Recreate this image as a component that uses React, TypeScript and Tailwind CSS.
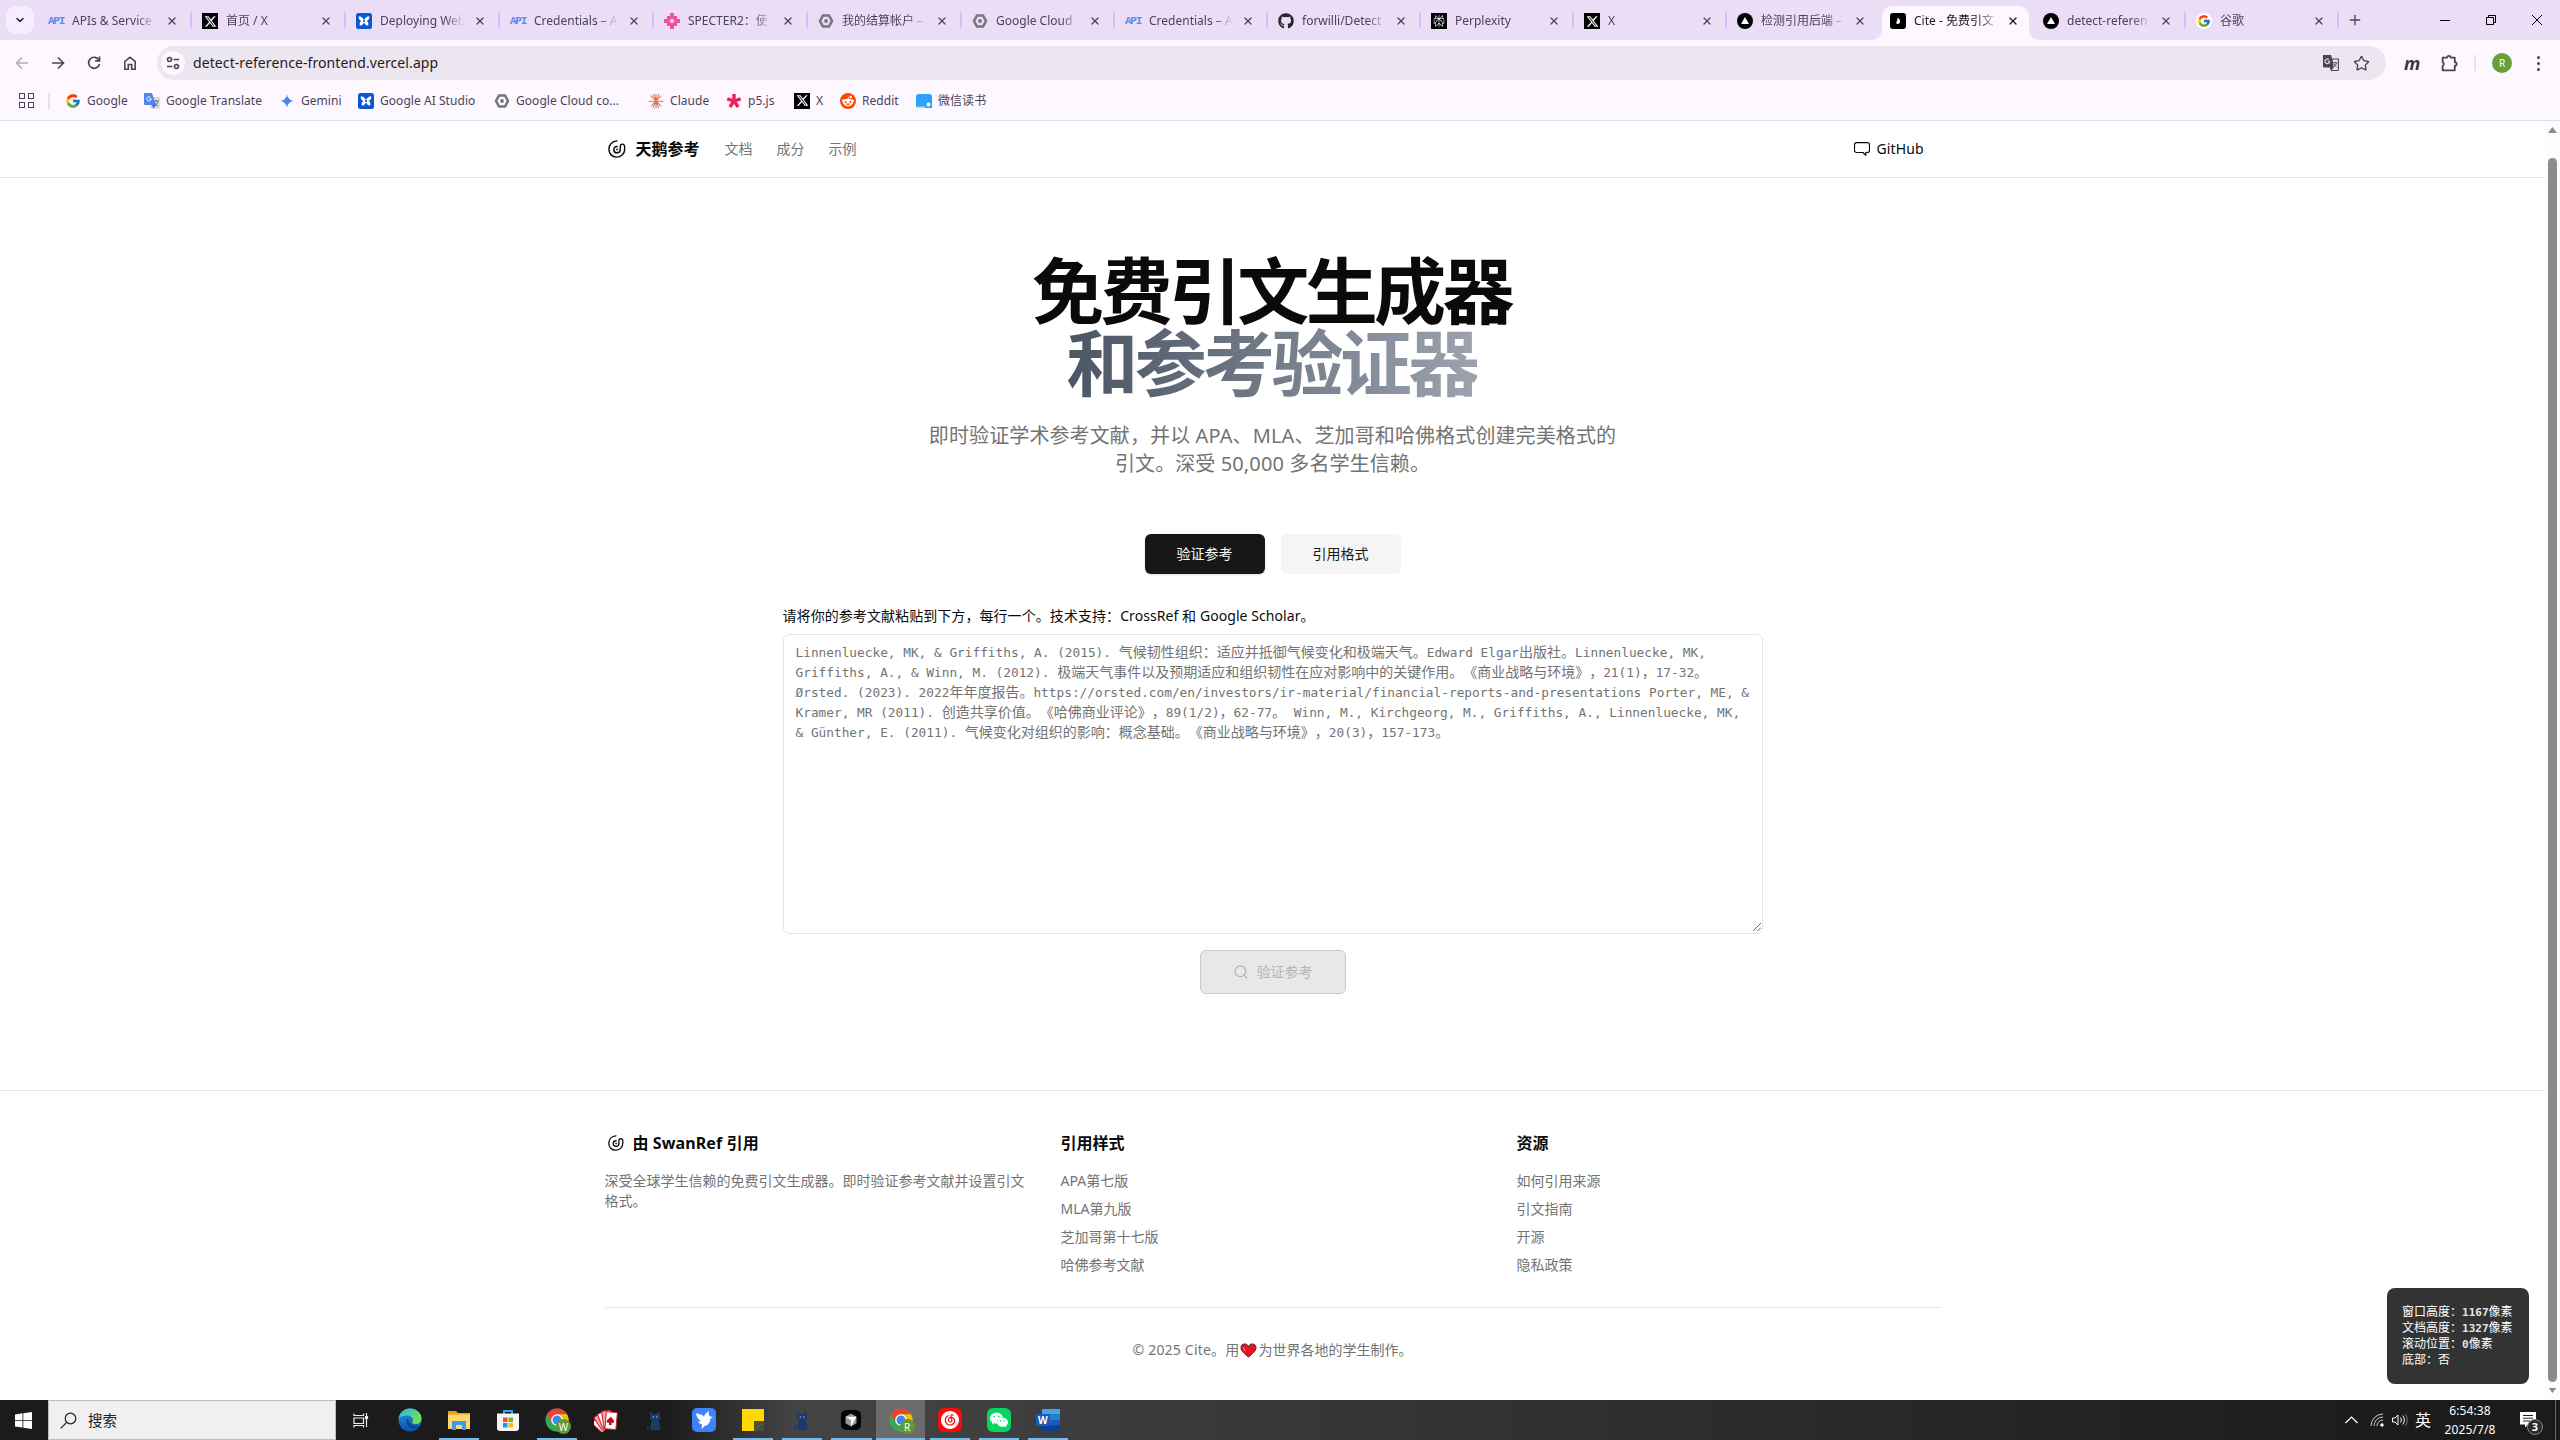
import React from "react";
import { FcGoogle } from "react-icons/fc";
import { FaGithub, FaXTwitter, FaRedditAlien } from "react-icons/fa6";
import { SiWechat, SiNeteasecloudmusic, SiPerplexity } from "react-icons/si";
import { Search, Star, X, Plus, ChevronDown } from "lucide-react";

/* ---------- small glyphs ---------- */

const ApiIcon = () => (
  <span className="font-['Liberation_Sans_Narrow','Liberation_Mono',monospace] text-[11px] font-bold leading-4 tracking-[-1.300px] text-[#5b8def]">API</span>
);
const XIcon = () => (
  <span className="flex size-4 items-center justify-center bg-black">
    <FaXTwitter className="size-[13px] text-white" />
  </span>
);
const StudioIcon = () => (
  <svg viewBox="0 0 16 16" className="size-4">
    <rect width="16" height="16" rx="2.500" fill="#0b57d0" />
    <path d="M2.800 3.200c2.600.2 4.300 1.600 5.200 4 .9-2.400 2.600-3.800 5.200-4 .4 2.200-.6 3.900-2.600 4.800 1.700.9 2.200 2.700 1.500 4.600C10.300 12.600 8.800 11.300 8 9.200c-.8 2.100-2.300 3.400-4.100 3.400-.7-1.900-.2-3.700 1.500-4.600C3.400 7.100 2.400 5.400 2.800 3.200z" fill="#fff" />
    <circle cx="8" cy="8" r="1.100" fill="#0b57d0" />
  </svg>
);
const SpecterIcon = () => (
  <svg viewBox="0 0 16 16" className="size-4" fill="#f0529c">
    <path d="M6 0h4v3h3v3h3v4h-3v3h-3v3H6v-3H3v-3H0V6h3V3h3zM8 5.500L5.500 8 8 10.500 10.500 8z" fillRule="evenodd" />
  </svg>
);
const CloudHex = () => (
  <svg viewBox="0 0 16 16" className="size-4" fill="none" stroke="#77777a">
    <path d="M5 2.500h6L14 8l-3 5.500H5L2 8z" strokeWidth="2.600" />
    <circle cx="8" cy="8" r="1.900" fill="#77777a" stroke="none" />
  </svg>
);
const VercelIcon = () => (
  <svg viewBox="0 0 16 16" className="size-4">
    <circle cx="8" cy="8" r="8" fill="#000" />
    <path d="M8 4l4 7H4z" fill="#fff" />
  </svg>
);
const CiteIcon = () => (
  <svg viewBox="0 0 16 16" className="size-4">
    <rect width="16" height="16" rx="3" fill="#000" />
    <path d="M7.500 4.500c2.500 1.500 3 3.500 2.400 5-.5 1.400-2.400 2-3.300.9-.8-1 .2-2 .6-3 .3-.8.200-2 .3-2.900z" fill="#fff" />
  </svg>
);
const PerplexityIcon = () => (
  <span className="flex size-4 items-center justify-center bg-black">
    <SiPerplexity className="size-3 text-white" />
  </span>
);
const TranslateIcon = () => (
  <svg viewBox="0 0 16 16" className="size-4">
    <rect x="6" y="4" width="10" height="12" rx="1" fill="#dadce0" />
    <path d="M9 8h6M12 7v1M14 8c-.5 2.500-2 4-4 5M10.500 9.500c.8 1.800 2 2.800 3.500 3.500" stroke="#5f6368" strokeWidth=".9" fill="none" />
    <path d="M1 0h7l4 12H1a1 1 0 0 1-1-1V1a1 1 0 0 1 1-1z" fill="#4d86ec" />
    <path d="M7.200 5.800H5.100M7.200 5.800a2.200 2.200 0 1 1-.8-1.700" stroke="#fff" strokeWidth="1" fill="none" />
    <path d="M8 12h4l-2.500 3.500z" fill="#3367d6" />
  </svg>
);
const GeminiIcon = () => (
  <svg viewBox="0 0 16 16" className="size-4">
    <defs>
      <linearGradient id="gem" x1="0" y1="1" x2="1" y2="0">
        <stop offset="0" stopColor="#2a9be8" />
        <stop offset=".6" stopColor="#4b88e2" />
        <stop offset="1" stopColor="#8b77d8" />
      </linearGradient>
    </defs>
    <path d="M8 1.500C8.600 5 10.800 7.400 14.500 8 10.800 8.600 8.600 11 8 14.500 7.400 11 5.200 8.600 1.500 8 5.200 7.400 7.400 5 8 1.500z" fill="url(#gem)" />
  </svg>
);
const ClaudeIcon = () => (
  <svg viewBox="0 0 16 16" className="size-4" stroke="#d97757" strokeWidth="1.050" strokeLinecap="round">
    <path d="M8 1v14M1 8.300h14M3 2.800l10 10.400M13 3L3 13M5.600 1.500l4.800 13M11 1.500l-6 13M1.300 5.300" />
  </svg>
);
const P5Icon = () => (
  <svg viewBox="0 0 16 16" className="size-4" stroke="#ed225d" strokeWidth="3.400">
    <path d="M8 8V1M8 8l6.700-2.200M8 8l4.200 5.900M8 8l-4.200 5.900M8 8L1.300 5.800" />
  </svg>
);
const RedditIcon = () => (
  <span className="flex size-4 items-center justify-center rounded-full bg-[#ff4500]">
    <FaRedditAlien className="size-3 text-white" />
  </span>
);
const ReadIcon = () => (
  <svg viewBox="0 0 16 16" className="size-4">
    <path d="M3 1h10a3 3 0 0 1 3 3v11H2a2 2 0 0 1-2-2V4a3 3 0 0 1 3-3z" fill="#2ba3fb" />
    <circle cx="12.500" cy="11.500" r="2" fill="#fff" />
    <path d="M1 13.500h9l-2 1.500H1z" fill="#b8e0ff" />
  </svg>
);
const SwanLogo = ({ className }: { className: string }) => (
  <svg viewBox="0 0 20 20" className={className} fill="none" stroke="#0a0a0a" strokeWidth="1.600" strokeLinecap="round">
    <path d="M10 1C4.500 1.300 1 5.200 1 10.300 1 15.300 4.700 19 9.500 19c5 0 8.700-3.400 9-8V7.800c0-2-1-3.200-2.500-3.200S13.600 5.700 13.600 7.400v3.200c0 2.100-1.400 3.600-3.500 3.600s-3.600-1.400-3.600-3.500S8 7.200 10.200 7.200" />
    <path d="M11 10.200c-.3-.6-1.400-.7-1.600.2-.2.900.9 1.200 1.300.7" strokeWidth="1.100" />
  </svg>
);

/* ---------- browser chrome ---------- */

const tabs: { icon: React.ReactNode; title: string; active?: boolean }[] = [
  { icon: <ApiIcon />, title: "APIs & Service" },
  { icon: <XIcon />, title: "首页 / X" },
  { icon: <StudioIcon />, title: "Deploying Web" },
  { icon: <ApiIcon />, title: "Credentials – A" },
  { icon: <SpecterIcon />, title: "SPECTER2：使" },
  { icon: <CloudHex />, title: "我的结算帐户 –" },
  { icon: <CloudHex />, title: "Google Cloud" },
  { icon: <ApiIcon />, title: "Credentials – A" },
  { icon: <FaGithub className="size-4 text-[#24292f]" />, title: "forwilli/Detect" },
  { icon: <PerplexityIcon />, title: "Perplexity" },
  { icon: <XIcon />, title: "X" },
  { icon: <VercelIcon />, title: "检测引用后端 –" },
  { icon: <CiteIcon />, title: "Cite - 免费引文", active: true },
  { icon: <VercelIcon />, title: "detect-referen" },
  { icon: <span className="flex size-4 items-center justify-center rounded-full bg-white"><FcGoogle className="size-3.5" /></span>, title: "谷歌" },
];

const Tab = ({ icon, title, active, wide }: { icon: React.ReactNode; title: string; active?: boolean; wide: boolean }) => (
  <div className={"relative mt-1.5 flex h-[34px] shrink-0 items-center pl-[11px] pr-[13px] " + (wide ? "w-[154px] " : "w-[153px] ") + (active ? "text-[#1d1b20]" : "text-[#4a4458]")}>
    {active && (
      <>
        <div className="absolute inset-y-0 left-[3px] right-[3px] rounded-t-[10px] bg-[#fdf7ff]" />
        <svg viewBox="0 0 10 10" className="absolute bottom-0 -left-[7px] size-[10px]" fill="#fdf7ff"><path d="M10 0v10H0A10 10 0 0 0 10 0z" /></svg>
        <svg viewBox="0 0 10 10" className="absolute bottom-0 -right-[7px] size-[10px]" fill="#fdf7ff"><path d="M0 0v10h10A10 10 0 0 1 0 0z" /></svg>
      </>
    )}
    <span className="relative -mt-1 flex w-4 shrink-0 justify-center">{icon}</span>
    <span className="relative -mt-1 ml-2 w-[84px] overflow-hidden whitespace-nowrap text-[12px] leading-4 [mask-image:linear-gradient(to_right,#000_78%,transparent)]">{title}</span>
    <X className="relative -mt-1 ml-auto size-3 shrink-0" strokeWidth={2.600} />
  </div>
);

const bookmarks: { icon: React.ReactNode; label: string; w: string }[] = [
  { icon: <FcGoogle className="size-4" />, label: "Google", w: "w-[79px]" },
  { icon: <TranslateIcon />, label: "Google Translate", w: "w-[135px]" },
  { icon: <GeminiIcon />, label: "Gemini", w: "w-[79px]" },
  { icon: <StudioIcon />, label: "Google AI Studio", w: "w-[136px]" },
  { icon: <CloudHex />, label: "Google Cloud co...", w: "w-[154px]" },
  { icon: <ClaudeIcon />, label: "Claude", w: "w-[78px]" },
  { icon: <P5Icon />, label: "p5.js", w: "w-[68px]" },
  { icon: <XIcon />, label: "X", w: "w-[46px]" },
  { icon: <RedditIcon />, label: "Reddit", w: "w-[76px]" },
  { icon: <ReadIcon />, label: "微信读书", w: "w-[90px]" },
];

const separatorAfter = (i: number) => !tabs[i].active && !(tabs[i + 1] && tabs[i + 1].active);

const Chrome = () => (
  <div className="h-[121px] shrink-0 border-b border-[#e3dcec] bg-[#fdf7ff] text-[#4a4458]">
    <div className="flex h-10 bg-[#eaddf5]">
      <div className="ml-1.5 mr-[3px] mt-1.5 flex h-7 w-7 shrink-0 items-center justify-center rounded-[10px] bg-[#f6edff]">
        <ChevronDown className="size-3 text-[#1d1b20]" strokeWidth={3} />
      </div>
      {tabs.map((t, i) => (
        <div key={i} className="relative">
          <Tab {...t} wide={i < 6} />
          {separatorAfter(i) && <div className="absolute -right-px top-3 h-4 w-0.5 rounded bg-[#d6bcfa]" />}
        </div>
      ))}
      <Plus className="ml-[9px] mt-3 size-4" strokeWidth={2} />
      <div className="ml-auto flex items-center gap-[30px] pr-[17px] text-black">
        <svg viewBox="0 0 12 12" className="size-3" stroke="currentColor"><path d="M1 6.500h10" /></svg>
        <svg viewBox="0 0 12 12" className="ml-1 size-3" stroke="currentColor" fill="none"><path d="M1.500 3.500h7v7h-7zM3.500 3.500v-2h7v7h-2" /></svg>
        <svg viewBox="0 0 12 12" className="ml-1 size-3" stroke="currentColor"><path d="M1 1l10 10M11 1L1 11" /></svg>
      </div>
    </div>
    <div className="flex h-[46px] items-center">
      <svg viewBox="0 0 16 16" className="ml-[14px] size-4 text-[#b1a9b9]" fill="none" stroke="currentColor" strokeWidth="1.600"><path d="M14 8H2.500M8 2.500L2.500 8 8 13.500" /></svg>
      <svg viewBox="0 0 16 16" className="ml-5 size-4" fill="none" stroke="currentColor" strokeWidth="1.600"><path d="M2 8h11.500M8 2.500L13.500 8 8 13.500" /></svg>
      <svg viewBox="0 0 16 16" className="ml-5 size-4" fill="none" stroke="currentColor" strokeWidth="1.700"><path d="M13 5.200A5.500 5.500 0 1 0 13.500 9" /><path d="M13.500 1.500v4.300H9.200" /></svg>
      <svg viewBox="0 0 16 16" className="ml-5 size-4" fill="none" stroke="currentColor" strokeWidth="1.600"><path d="M2.800 6.500L8 2.300l5.200 4.200v7.700H9.700V9.500H6.300v4.700H2.800z" /></svg>
      <div className="ml-[19px] flex h-[34px] w-[2229px] items-center rounded-full bg-[#ece6f0] pl-1">
        <div className="flex size-6 items-center justify-center rounded-full bg-[#fdf7ff]">
          <svg viewBox="0 0 16 16" className="size-4" fill="none" stroke="#4a4458" strokeWidth="1.600"><circle cx="4.500" cy="4.500" r="2" /><path d="M8.500 4.500H14M2 11.500h5.500" /><circle cx="11.500" cy="11.500" r="2" /></svg>
        </div>
        <span className="ml-2 text-[14px] leading-5 tracking-[0.090px] text-[#1d1b20]">detect-reference-frontend.vercel.app</span>
        <svg viewBox="0 0 18 18" className="ml-auto size-[18px]">
          <path d="M1 1h8l1.200 3.500H16a1 1 0 0 1 1 1V16a1 1 0 0 1-1 1H9l-1.200-3.500H2a1 1 0 0 1-1-1z" fill="#4a4458" />
          <path d="M10.600 5.600H15.900v10.300H9.800l2-2.400z" fill="#ece6f0" />
          <path d="M7.800 7.300H5.600M7.800 7.300a2.400 2.400 0 1 1-.9-1.900" stroke="#ece6f0" strokeWidth="1.100" fill="none" />
          <path d="M11 8.800h4.300M13.300 7.800v1M14.600 8.800c-.4 1.900-1.400 3-2.600 3.900M12 10c.6 1.300 1.500 2.200 2.700 2.900" stroke="#4a4458" strokeWidth=".9" fill="none" />
        </svg>
        <Star className="ml-[13px] mr-[16px] size-[17px]" strokeWidth={1.900} />
      </div>
      <span className="ml-[18px] w-[18px] text-[18px] font-bold italic leading-5 text-[#3a3540]">m</span>
      <svg viewBox="0 0 18 18" className="ml-[18px] size-[19px]" fill="none" stroke="currentColor" strokeWidth="1.700" strokeLinejoin="round"><path d="M2.500 3.500h4.300a1.700 1.700 0 0 1 3.400 0h3.800v4.200a1.700 1.700 0 0 1 0 3.400v4.400H2.500v-4.200a2 2 0 0 0 0-3.600z" /></svg>
      <div className="ml-[15px] h-4 w-0.5 bg-[#eaddf5]" />
      <div className="ml-[16px] flex size-5 items-center justify-center rounded-full bg-[#689f38] text-[10px] leading-3 text-white">R</div>
      <div className="ml-[25px] flex flex-col gap-[3px]">
        <i className="size-[3px] rounded-full bg-[#4a4458]" /><i className="size-[3px] rounded-full bg-[#4a4458]" /><i className="size-[3px] rounded-full bg-[#4a4458]" />
      </div>
    </div>
    <div className="flex h-[34px] items-center pb-[5px] text-[12px] leading-4 text-[#4a4458]">
      <div className="ml-[19px] grid grid-cols-2 gap-[3px]">
        {[0, 1, 2, 3].map((i) => <i key={i} className="size-[6px] border-[1.500px] border-[#4a4458]" />)}
      </div>
      <div className="ml-[14px] mr-[15px] h-4 w-0.5 bg-[#eaddf5]" />
      {bookmarks.map((b) => (
        <div key={b.label} className={"flex shrink-0 items-center gap-[6px] whitespace-nowrap tracking-[0.050px] " + b.w}>
          <span className="shrink-0">{b.icon}</span>
          {b.label}
        </div>
      ))}
    </div>
  </div>
);

/* ---------- page ---------- */

const mono = "[text-spacing-trim:space-all] font-['DejaVu_Sans_Mono','Noto_Sans_CJK_SC',monospace]";
const refLines = [
  "Linnenluecke, MK, & Griffiths, A. (2015). 气候韧性组织：适应并抵御气候变化和极端天气。Edward Elgar出版社。Linnenluecke, MK,",
  "Griffiths, A., & Winn, M. (2012). 极端天气事件以及预期适应和组织韧性在应对影响中的关键作用。《商业战略与环境》，21(1)，17-32。",
  "Ørsted. (2023). 2022年年度报告。https://orsted.com/en/investors/ir-material/financial-reports-and-presentations Porter, ME, &",
  "Kramer, MR (2011). 创造共享价值。《哈佛商业评论》，89(1/2)，62-77。 Winn, M., Kirchgeorg, M., Griffiths, A., Linnenluecke, MK,",
  "& Günther, E. (2011). 气候变化对组织的影响：概念基础。《商业战略与环境》，20(3)，157-173。",
];

const Line = ({ text }: { text: string }) => (
  <div className="h-5 whitespace-pre">
    {text.split(/([\u0000-\u00ff]+)/).filter(Boolean).map((s, i) =>
      /^[\u0000-\u00ff]/.test(s) ? <span key={i} className="text-[12.790px] leading-none">{s}</span> : <span key={i}>{s}</span>
    )}
  </div>
);

const FooterCol = ({ title, items }: { title: string; items: string[] }) => (
  <div>
    <h3 className="text-[16px] font-bold leading-6 text-[#0a0a0a]">{title}</h3>
    <ul className="mt-4 space-y-2 text-[14px] leading-5">
      {items.map((t) => <li key={t}>{t}</li>)}
    </ul>
  </div>
);

const Page = () => (
  <div className="flex min-w-0 flex-1 flex-col bg-white">
    <header className="h-[57px] shrink-0 border-b border-[#e5e5e5]">
      <div className="mx-auto flex h-full w-[1336px] items-center">
        <SwanLogo className="ml-[3px] size-[18px]" />
        <span className="ml-[10px] mr-px text-[16px] font-bold leading-6 text-[#0a0a0a]">天鹅参考</span>
        <nav className="ml-6 flex gap-6 text-[14px] leading-5 text-[#737373]"><span>文档</span><span>成分</span><span>示例</span></nav>
        <svg viewBox="0 0 16 14" className="ml-auto h-[14px] w-4" fill="none" stroke="#0a0a0a" strokeWidth="1.200" strokeLinejoin="round"><path d="M2.500.7h11a2 2 0 0 1 2 2v5.800a2 2 0 0 1-2 2h-1.700v2.700l-2.900-2.700H2.500a2 2 0 0 1-2-2V2.700a2 2 0 0 1 2-2z" /></svg>
        <span className="ml-[7px] mr-[16px] w-12 text-[14px] leading-5 tracking-[0.100px] text-[#0a0a0a]">GitHub</span>
      </div>
    </header>
    <main className="flex h-[912px] shrink-0 flex-col items-center">
      <h1 className="mt-[76px] pr-[2px] text-center text-[72px] font-bold leading-[72px] tracking-[-3.600px] text-[#0a0a0a]">
        免费引文生成器
        <br />
        <span className="inline-block bg-linear-to-r from-[#4b5563] to-[#9ca3af] bg-clip-text text-transparent">和参考验证器</span>
      </h1>
      <p className="mt-6 text-center text-[20px] leading-7 tracking-[0.110px] text-[#737373]">
        即时验证学术参考文献，并以 APA、MLA、芝加哥和哈佛格式创建完美格式的
        <br />
        引文。深受 50,000 多名学生信赖。
      </p>
      <div className="mt-[56px] flex gap-4 text-[14px] leading-5">
        <button className="h-10 w-[120px] rounded-md bg-[#171717] text-[#fafafa] shadow-sm">验证参考</button>
        <button className="h-10 w-[120px] rounded-md bg-[#f5f5f5] text-[#171717]">引用格式</button>
      </div>
      <div className="mt-8 w-[980px]">
        <div className="whitespace-nowrap text-[14px] leading-5 tracking-[0.070px] text-[#0a0a0a]">请将你的参考文献粘贴到下方，每行一个。技术支持：CrossRef 和 Google Scholar。</div>
        <div className={"relative mt-2 h-[300px] rounded-md border border-[#e5e5e5] px-3 pt-[7px] text-[14px] leading-5 text-[#737373] " + mono}>
          {refLines.map((l) => <Line key={l} text={l} />)}
          <svg viewBox="0 0 8 8" className="absolute bottom-0.5 right-px size-2" stroke="#555" strokeWidth=".9"><path d="M0 8l8-8M4.500 8L8 4.500" /></svg>
        </div>
      </div>
      <button className="mt-4 flex h-11 w-[146px] items-center justify-center rounded-md border border-[#c9c9c9] bg-[#e8e8e8] text-[14px] leading-5 text-[#b5b5b5]">
        <Search className="mr-2 size-4" strokeWidth={2} />
        验证参考
      </button>
    </main>
    <footer className="flex-1 border-t border-[#e5e5e5] text-[#737373]">
      <div className="mx-auto w-[1336px] pt-10">
        <div className="grid h-[176px] grid-cols-3 gap-8">
          <div>
            <div className="flex h-6 items-center">
              <SwanLogo className="ml-[3px] size-4" />
              <span className="ml-[9px] text-[16px] font-bold leading-6 tracking-[0.100px] text-[#0a0a0a]">由 SwanRef 引用</span>
            </div>
            <p className="mt-4 text-[14px] leading-5">深受全球学生信赖的免费引文生成器。即时验证参考文献并设置引文格式。</p>
          </div>
          <FooterCol title="引用样式" items={["APA第七版", "MLA第九版", "芝加哥第十七版", "哈佛参考文献"]} />
          <FooterCol title="资源" items={["如何引用来源", "引文指南", "开源", "隐私政策"]} />
        </div>
        <div className="flex items-center justify-center border-t border-[#e5e5e5] pt-8 text-[14px] leading-5">
          <span className="tracking-[0.200px]">© 2025 Cite。用</span>
          <svg viewBox="0 0 18 16" className="h-[15px] w-[19px]"><path d="M9 15C5 11.500 1 8.500 1 5c0-2.500 1.700-4 3.800-4C6.700 1 8.200 2 9 3.700 9.800 2 11.300 1 13.200 1 15.300 1 17 2.500 17 5c0 3.500-4 6.500-8 10z" fill="#e81224" stroke="#2b2b2b" /><path d="M4 4.500c-.5 1.500.5 3 1.500 4" stroke="#ff8a94" strokeWidth="1.200" fill="none" /></svg>
          <span>为世界各地的学生制作。</span>
        </div>
      </div>
    </footer>
  </div>
);

const Scrollbar = () => (
  <div className="flex w-[15px] shrink-0 flex-col items-center bg-[#fcfcfc]">
    <svg viewBox="0 0 9 6" className="mt-1.5 h-[6px] w-[9px]" fill="#8b8b8b"><path d="M4.500 0L9 6H0z" /></svg>
    <div className="mt-[25px] h-[1224px] w-[9px] rounded-full bg-[#8b8b8b]" />
    <svg viewBox="0 0 9 6" className="mt-[6px] h-[5px] w-[9px]" fill="#8b8b8b"><path d="M4.500 6L0 0h9z" /></svg>
  </div>
);

const Bold = ({ children }: { children: React.ReactNode }) => <b className="text-[11px] leading-none text-[#e5e5e5]">{children}</b>;
const ScrollInfo = () => (
  <div className={"absolute left-[2387px] top-[1288px] h-24 w-[142px] whitespace-nowrap rounded-lg bg-[#333] py-4 pl-[15px] text-[12px] leading-4 text-white " + mono}>
    <div className="h-4">窗口高度：<Bold>1167</Bold>像素</div>
    <div className="h-4">文档高度：<Bold>1327</Bold>像素</div>
    <div className="h-4">滚动位置：<Bold>0</Bold>像素</div>
    <div className="h-4">底部：否</div>
  </div>
);

/* ---------- taskbar ---------- */

const EdgeIcon = () => (
  <svg viewBox="0 0 24 24" className="size-6">
    <defs>
      <linearGradient id="eg1" x1="0" y1="0" x2="1" y2=".5"><stop offset="0" stopColor="#2bb6e8" /><stop offset="1" stopColor="#6fe05a" /></linearGradient>
      <linearGradient id="eg2" x1="0" y1="0" x2="0" y2="1"><stop offset="0" stopColor="#1e9de0" /><stop offset="1" stopColor="#0c4fa8" /></linearGradient>
    </defs>
    <circle cx="12" cy="12" r="11.500" fill="url(#eg2)" />
    <path d="M.6 11C1.300 5 6 .5 12 .5c6.500 0 11.500 4.500 11.500 10 0 3.500-2.500 5.500-5.500 5.500-2 0-4-.6-4-1.500 0-.5 1-1 1-2.500C15 9.500 12.500 7.500 9 7.500 5 7.500 2 9 .6 11z" fill="url(#eg1)" />
    <path d="M9.500 10.500c-2 3-.5 8 4.500 9.500 3 .8 6 0 8-2.500-1.500.8-3 1-4.500.8-4-.5-6.500-3.300-8-7.800z" fill="#123f86" />
  </svg>
);
const FolderIcon = () => (
  <svg viewBox="0 0 24 24" className="size-6">
    <path d="M1 3h8l2 2h12v16H1z" fill="#e8a317" />
    <path d="M1 6.500h22V21H1z" fill="#ffd76a" />
    <path d="M5 13h14v9h-4v-5H9v5H5z" fill="#3f9be8" />
  </svg>
);
const StoreIcon = () => (
  <svg viewBox="0 0 24 24" className="size-6">
    <path d="M8 6V3h8v3" stroke="#29a9ea" strokeWidth="2" fill="none" />
    <path d="M1 5.500h22V20a3 3 0 0 1-3 3H4a3 3 0 0 1-3-3z" fill="#f5f5f5" />
    <path d="M7 9.500h4.500V14H7z" fill="#f25022" /><path d="M12.500 9.500H17V14h-4.500z" fill="#7fba00" /><path d="M7 15h4.500v4.500H7z" fill="#00a4ef" /><path d="M12.500 15H17v4.500h-4.500z" fill="#ffb900" />
  </svg>
);
const ChromeIcon = ({ letter }: { letter: string }) => (
  <span className="relative flex size-6">
    <svg viewBox="0 0 24 24" className="size-6">
      <circle cx="12" cy="12" r="11.500" fill="#34a853" />
      <path d="M2 6.200A11.500 11.500 0 0 1 22 6.250L12 6.250 12 12 7 15z" fill="#ea4335" />
      <path d="M22 6.250A11.500 11.500 0 0 1 12 23.500L17 14.900 17 9 12 6.250z" fill="#fbbc04" />
      <circle cx="12" cy="12" r="5.800" fill="#fff" /><circle cx="12" cy="12" r="4.500" fill="#4285f4" />
    </svg>
    <span className="absolute -bottom-0.5 -right-0.5 flex size-[15px] items-center justify-center rounded-full bg-[#5f9a35] text-[10px] leading-3 text-white">{letter}</span>
  </span>
);
const CardsIcon = () => (
  <svg viewBox="0 0 24 24" className="size-6" stroke="#d0202c" strokeWidth="1">
    <rect x="7" y="4" width="9" height="14" rx="1" fill="#fff" transform="rotate(-48 15 20)" />
    <rect x="8" y="3" width="9" height="15" rx="1" fill="#f3a5a8" transform="rotate(-34 15 20)" />
    <rect x="9" y="3" width="9" height="15" rx="1" fill="#fff" transform="rotate(-20 15 20)" />
    <rect x="10" y="2.500" width="9" height="16" rx="1" fill="#f3a5a8" transform="rotate(-8 15 20)" />
    <rect x="11" y="4" width="11" height="17" rx="1" fill="#fff" transform="rotate(5 15 20)" />
    <path d="M17 8.500c1.500 2.700 3.500 3.600 3 5.500-.4 1.300-2 1.300-2.600.4l.4 2.600h-3l.4-2.600c-.9.700-2.500.4-2.500-1 0-1.900 2.900-2.600 4.300-4.900z" fill="#b3131f" stroke="none" />
  </svg>
);
const CatIcon = () => (
  <svg viewBox="0 0 24 24" className="size-6" fill="#1e3a68">
    <path d="M7 3l3 3h3.500L16.500 3l.5 7.500c-.3 1-.8 1.700-1.300 2.200C17 15.500 17.500 19 17.500 22h-10c-.4-3.500.2-7 1.300-9.300-.7-.5-1.500-1.200-1.800-2.200zM5.500 22c-1.500-.5-1.800-3-1-5l1.300 1z" />
    <circle cx="10.300" cy="9" r=".8" fill="#8fb4e0" /><circle cx="13.800" cy="9" r=".8" fill="#8fb4e0" />
  </svg>
);
const BirdIcon = () => (
  <svg viewBox="0 0 24 24" className="size-6">
    <rect width="24" height="24" rx="5" fill="#3f83f8" />
    <path d="M4 5.500c3.500.3 6 1.300 8 3C13 6 14.500 4 17 3c-.6 2.300-.2 4 .8 5.300l3.200.9-2.700 1.500c-.3 4.300-2.500 6.800-5.800 7.300L9.500 21l.5-4.500c-1.500-.5-3-1.500-3.800-2.800l2.800-.4C6.500 11.500 4.600 9 4 5.500z" fill="#fff" />
  </svg>
);
const NotesIcon = () => (
  <svg viewBox="0 0 24 24" className="size-6"><path d="M1 1h22v12L13 23H1z" fill="#ffd800" /><path d="M23 13v10H13z" fill="#4a4a4a" /><path d="M13 23V13h10z" fill="#55502a" /></svg>
);
const CursorIcon = () => (
  <svg viewBox="0 0 24 24" className="size-[22px]"><rect x="1" y="1" width="22" height="22" rx="6" fill="#050505" /><path d="M12 5l6 3.500v7L12 19l-6-3.500v-7z" fill="#999" /><path d="M6 8.500h12L12 19v-7z" fill="#fff" /></svg>
);
const WordIcon = () => (
  <span className="relative flex size-6">
    <svg viewBox="0 0 24 24" className="size-6"><path d="M6 1h18v5.500H6z" fill="#41a5ee" /><path d="M6 6.500h18V12H6z" fill="#2b7cd3" /><path d="M6 12h18v5.500H6z" fill="#185abd" /><path d="M6 17.500h18V23H6z" fill="#103f91" /></svg>
    <span className="absolute left-0 top-1.5 flex h-3 w-3.5 items-center justify-center rounded-[1px] bg-[#185abd] text-[10px] font-bold leading-3 text-white">W</span>
  </span>
);

const apps: { icon: React.ReactNode; open?: boolean; focus?: boolean }[] = [
  { icon: <svg viewBox="0 0 16 16" className="size-4" fill="none" stroke="#eee" strokeWidth="1.200"><path d="M1 1.600V3.500h9.500V1.600M1 6h9.500v5.500H1zM1 15.500v-2h9.500v2M13.500 1v14" /><path d="M12.500 4.500h2v2h-2z" fill="#eee" /></svg> },
  { icon: <EdgeIcon /> },
  { icon: <FolderIcon />, open: true },
  { icon: <StoreIcon /> },
  { icon: <ChromeIcon letter="W" />, open: true },
  { icon: <CardsIcon /> },
  { icon: <CatIcon /> },
  { icon: <BirdIcon /> },
  { icon: <NotesIcon />, open: true },
  { icon: <CatIcon />, open: true },
  { icon: <CursorIcon />, open: true },
  { icon: <ChromeIcon letter="R" />, open: true, focus: true },
  { icon: <span className="flex size-6 items-center justify-center rounded-md bg-[#fa0a0a]"><SiNeteasecloudmusic className="size-[18px] text-white" /></span>, open: true },
  { icon: <span className="flex size-6 items-center justify-center rounded-md bg-[#07d463]"><SiWechat className="size-[18px] text-white" /></span>, open: true },
  { icon: <WordIcon />, open: true },
];

const Taskbar = () => (
  <div className="flex h-10 shrink-0 bg-linear-to-r from-[#1b1b1b] from-[26%] via-[#444] via-[31%] to-[#1b1b1b] to-[95%] text-white">
    <div className="flex w-12 items-center justify-center pr-px">
      <svg viewBox="0 0 17 17" className="size-[17px]" fill="#fff"><path d="M0 2.400L7.500 1.300V8H0zM8.300 1.200L17 0v8H8.300zM0 8.800h7.500v6.800L0 14.500zM8.300 8.800H17V17l-8.700-1.200z" /></svg>
    </div>
    <div className="flex w-[288px] items-center border border-[#bdbdbd] bg-[#f0f0f0] pl-[11px] text-[14.500px] leading-5 text-[#222]">
      <svg viewBox="0 0 17 17" className="size-[17px]" fill="none" stroke="#222" strokeWidth="1.200"><circle cx="10.500" cy="6.500" r="5.300" /><path d="M6.700 10.300L.7 16.300" /></svg>
      <span className="ml-[11px]">搜索</span>
    </div>
    {apps.map((a, i) => (
      <div key={i} className={"relative flex w-[49.100px] shrink-0 items-center justify-center " + (a.focus ? "bg-[#6b6b6b]" : "")}>
        {a.icon}
        {a.open && <div className={"absolute bottom-0 h-0.5 bg-[#76b9ed] " + (a.focus ? "inset-x-0" : "inset-x-[4.500px]")} />}
      </div>
    ))}
    <div className="ml-auto flex items-center">
      <svg viewBox="0 0 13 8" className="h-2 w-[13px]" fill="none" stroke="#fff" strokeWidth="1.200"><path d="M.5 7l6-6 6 6" /></svg>
      <svg viewBox="0 0 14 14" className="ml-3 size-[14px]" fill="none" stroke="#ccc" strokeWidth="1"><path d="M1 13A12 12 0 0 1 13 1M4 13a9 9 0 0 1 9-9M7 13a6 6 0 0 1 6-6" /><circle cx="12" cy="12" r="1.700" fill="#fff" stroke="none" /></svg>
      <svg viewBox="0 0 16 14" className="ml-2 h-[14px] w-4" fill="none" stroke="#fff" strokeWidth="1"><path d="M.5 5H3l3-3v10L3 9H.5zM8.500 4.500a4 4 0 0 1 0 5M10.700 2.500a7 7 0 0 1 0 9" /><path d="M13 1a9 9 0 0 1 0 12" stroke="#777" /></svg>
      <span className="ml-[7px] text-[16px] leading-5">英</span>
      <div className="ml-[11px] w-14 whitespace-nowrap text-center text-[12px] leading-[19px] tracking-[0.100px]">
        <div>6:54:38</div>
        <div>2025/7/8</div>
      </div>
      <div className="relative ml-[22px] mr-[19px] h-4 w-4">
        <svg viewBox="0 0 16 16" className="size-4"><path d="M0 0h16v12.500H8L5 15.500v-3H0z" fill="#fff" /><path d="M3 3.500h10M3 6.200h10M3 9h7" stroke="#222" /></svg>
        <span className="absolute left-[7px] top-[7px] flex size-4 items-center justify-center rounded-full border border-[#888] bg-[#2b2b2b] text-[11px] font-bold leading-3">3</span>
      </div>
      <div className="mr-1 h-10 w-px bg-[#666]" />
    </div>
  </div>
);

export default function App() {
  return (
    <div className="relative flex h-[1440px] w-[2560px] flex-col overflow-hidden bg-white font-['Noto_Sans','Noto_Sans_CJK_SC',sans-serif]">
      <Chrome />
      <div className="flex min-h-0 flex-1">
        <Page />
        <Scrollbar />
      </div>
      <ScrollInfo />
      <Taskbar />
    </div>
  );
}
